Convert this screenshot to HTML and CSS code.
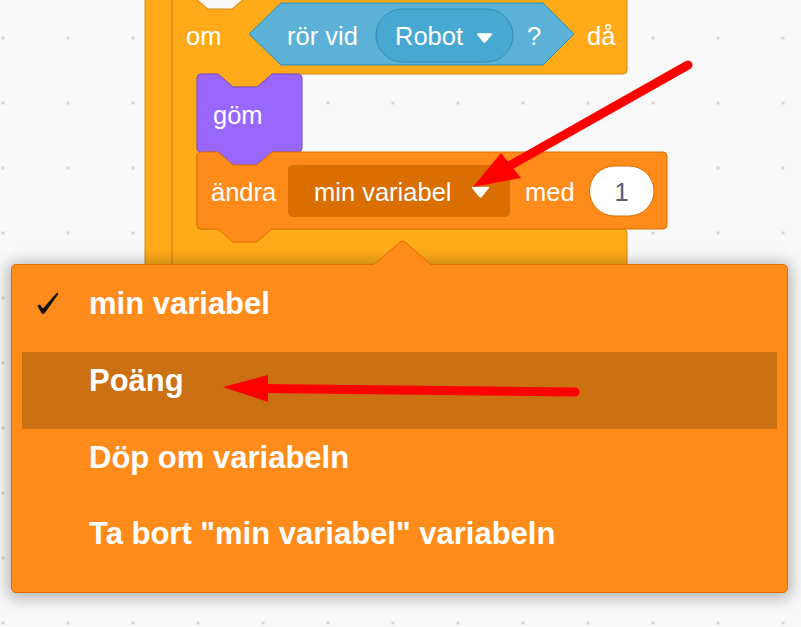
FILE: index.html
```html
<!DOCTYPE html>
<html lang="sv">
<head>
<meta charset="utf-8">
<title>Scratch – ändra variabel</title>
<link rel="stylesheet" href="styles.css">
</head>
<body>
<div class="workspace">
  <svg class="script" width="801" height="627" viewBox="0 0 801 627">
    <path class="blk control" d="M145,-40 H640 V-4 H172 V560 H145 Z"/>
    <path class="blk control" d="M172,-4 H193 L208,9 H232 L247,-4 H623 Q627,-4 627,0 V70 Q627,74 623,74 H272 L257,87 H233 L218,74 H201 Q197,74 197,78 V225 Q197,229 201,229 H623 Q627,229 627,233 V560 H172 Z"/>
    <path class="blk sensing" d="M249,34 L281,3 H543 L574,34 L543,65 H281 Z"/>
    <rect class="blk sensing-field" x="376" y="9" width="137" height="53" rx="26.5"/>
    <path class="caret" d="M477.5,34 H491.5 L485.3,41.6 Q484.5,42.6 483.7,41.6 Z"/>
    <path class="blk looks" d="M197,78 Q197,74 201,74 H218 L233,87 H257 L272,74 H298 Q302,74 302,78 V148 Q302,152 298,152 H272 L257,165 H233 L218,152 H201 Q197,152 197,148 Z"/>
    <path class="blk data" d="M197,156 Q197,152 201,152 H218 L233,165 H257 L272,152 H663 Q667,152 667,156 V225 Q667,229 663,229 H272 L257,242 H233 L218,229 H201 Q197,229 197,225 Z"/>
    <rect class="data-field" x="288" y="165" width="222" height="52" rx="5"/>
    <rect class="num-field" x="589.5" y="166" width="64.5" height="50" rx="25"/>
    <path class="caret" d="M472.5,187.5 H488.5 L481.4,196.4 Q480.5,197.5 479.6,196.4 Z"/>
    <g class="block-text">
      <text x="186" y="45">om</text>
      <text x="287" y="45">rör vid</text>
      <text x="395" y="45">Robot</text>
      <text x="527" y="45">?</text>
      <text x="587" y="45">då</text>
      <text x="213" y="124">göm</text>
      <text x="211" y="200.5">ändra</text>
      <text x="314" y="200.5">min variabel</text>
      <text x="525" y="200.5">med</text>
      <text class="num-text" x="621.5" y="200.5" text-anchor="middle">1</text>
    </g>
  </svg>

  <div class="dropdown">
    <svg class="dropdown-arrow" width="59" height="28" viewBox="0 0 59 28">
      <path class="arrow-fill" d="M0.5,25 L27,2 Q29.5,0 32,2 L58.5,25 L58.5,28 L0.5,28 Z"/>
      <path class="arrow-edge" d="M0.5,25 L27,2 Q29.5,0 32,2 L58.5,25"/>
    </svg>
    <ul class="menu">
      <li class="menu-item is-selected">
        <svg class="check" width="24" height="24" viewBox="0 0 24 24"><path d="M1.5,15 Q2.8,12.6 4.4,14 L7,17.6 L20.6,2 Q22.6,1.2 22.1,3.4 L8.6,22.2 Q7.1,23.8 5.6,22.2 Z"/></svg>min variabel
      </li>
      <li class="menu-item is-highlighted">Poäng</li>
      <li class="menu-item">Döp om variabeln</li>
      <li class="menu-item">Ta bort "min variabel" variabeln</li>
    </ul>
  </div>

  <svg class="annotations" width="801" height="627" viewBox="0 0 801 627">
    <line class="arrow-shaft" x1="688" y1="65" x2="509" y2="166"/>
    <polygon class="arrow-head" points="473,187 501,153 521,178"/>
    <line class="arrow-shaft" x1="575" y1="392" x2="262" y2="388.5"/>
    <polygon class="arrow-head" points="223,387 268,375 268,402"/>
  </svg>
</div>
</body>
</html>
```

FILE: styles.css
```css
html, body {
  margin: 0;
  padding: 0;
}

body {
  background: #f9f9f9;
  font-family: "Liberation Sans", Arial, sans-serif;
}

.workspace {
  position: relative;
  width: 801px;
  height: 627px;
  overflow: hidden;
  background-color: #f9f9f9;
  background-image: radial-gradient(circle, #d2d2d2 0, #d2d2d2 1.1px, rgba(210, 210, 210, 0) 1.9px);
  background-size: 65px 65px;
  background-position: -29.5px 5.5px;
}

.script {
  display: block;
}

.blk {
  stroke-width: 1;
  stroke-linejoin: round;
}

.control {
  fill: #ffab19;
  stroke: #cf8b17;
}

.sensing {
  fill: #5cb1d6;
  stroke: #2e8eb8;
}

.sensing-field {
  fill: #47a8d1;
  stroke: #2e8eb8;
}

.looks {
  fill: #9966ff;
  stroke: #774dcb;
}

.data {
  fill: #ff8c1a;
  stroke: #db6e00;
}

.data-field {
  fill: #db6e00;
}

.num-field {
  fill: #ffffff;
  stroke: #db6e00;
  stroke-width: 1;
}

.caret {
  fill: #ffffff;
  stroke: #ffffff;
  stroke-width: 1.5;
  stroke-linejoin: round;
}

.block-text {
  font-family: "Liberation Sans", Arial, sans-serif;
  font-size: 25.5px;
  fill: #ffffff;
}

.block-text .num-text {
  fill: #575e75;
}

.dropdown {
  position: absolute;
  left: 11px;
  top: 264px;
  width: 777px;
  height: 329px;
  box-sizing: border-box;
  padding: 10px;
  background: #ff8c1a;
  border: 1px solid #db6e00;
  border-radius: 5px;
  box-shadow: 0 2px 16px 3px rgba(0, 0, 0, 0.3);
}

.dropdown-arrow {
  position: absolute;
  left: 361px;
  top: -25.5px;
  overflow: visible;
}

.arrow-fill {
  fill: #ff8c1a;
}

.arrow-edge {
  fill: none;
  stroke: #db6e00;
  stroke-width: 1;
  stroke-linejoin: round;
}

.menu {
  list-style: none;
  margin: 0;
  padding: 0;
}

.menu-item {
  position: relative;
  height: 76.75px;
  box-sizing: border-box;
  padding: 13px 0 0 67px;
  font-family: "Liberation Sans", Arial, sans-serif;
  font-size: 31px;
  line-height: 31px;
  font-weight: bold;
  color: #ffffff;
  white-space: nowrap;
}

.menu-item.is-highlighted {
  background: rgba(0, 0, 0, 0.2);
}

.check {
  position: absolute;
  left: 14px;
  top: 16px;
  fill: #111111;
}

.annotations {
  position: absolute;
  left: 0;
  top: 0;
  pointer-events: none;
}

.arrow-shaft {
  stroke: #ff0000;
  stroke-width: 9;
  stroke-linecap: round;
}

.arrow-head {
  fill: #ff0000;
}
```
